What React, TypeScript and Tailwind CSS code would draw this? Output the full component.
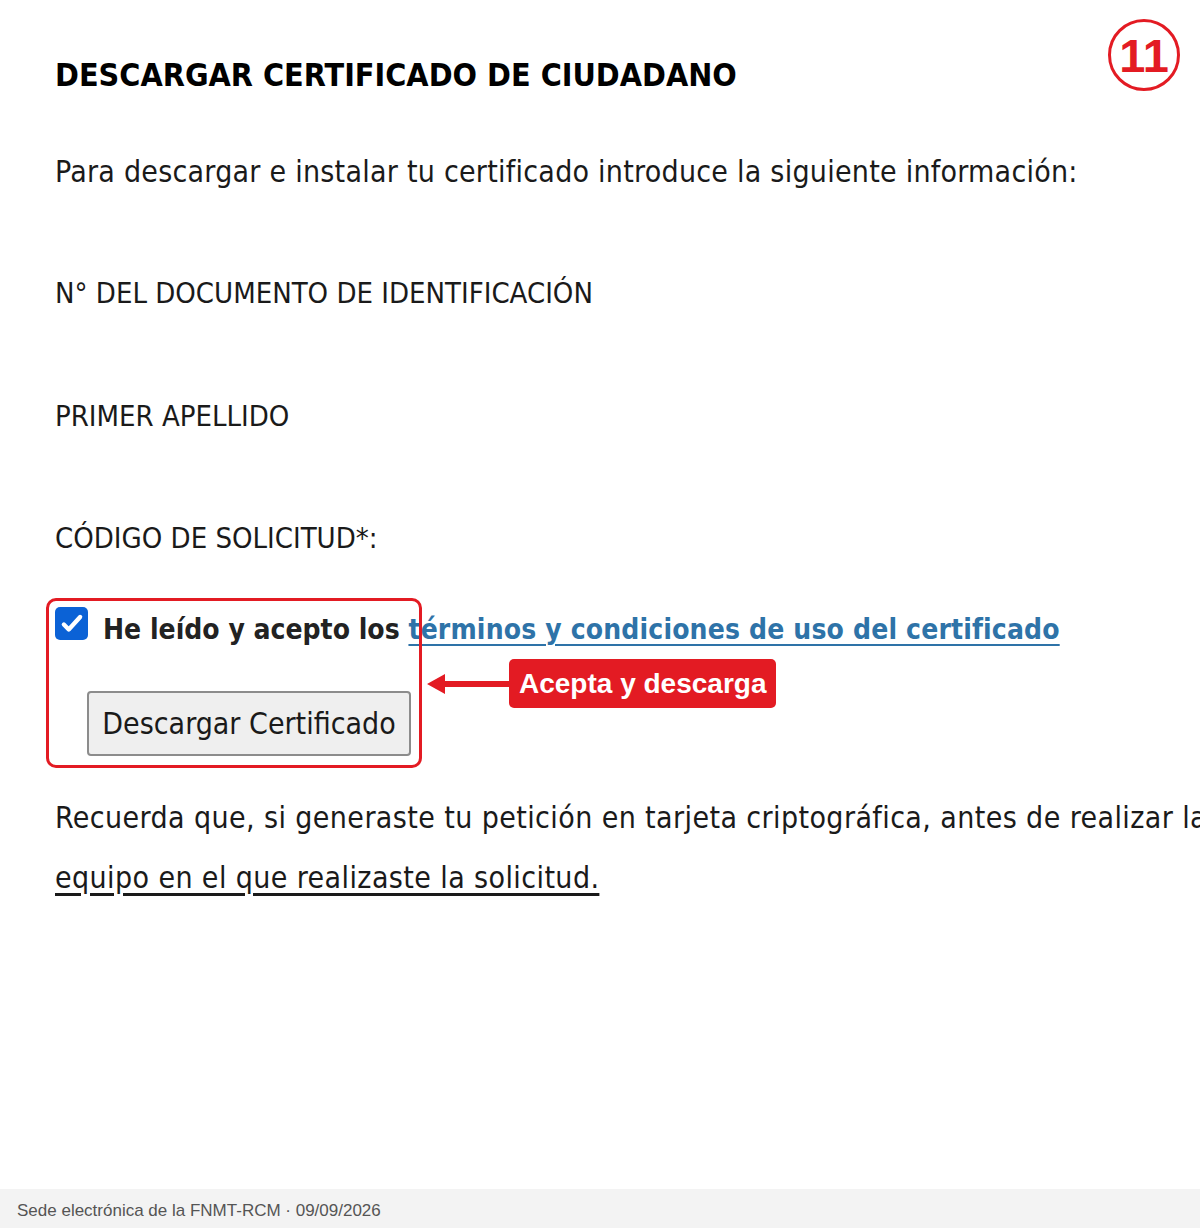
const FONT = "font-['DejaVu_Sans_Condensed','DejaVu_Sans',sans-serif]";

export default function App() {
  return (
    <div className="relative flex h-[1228px] w-[1200px] flex-col overflow-hidden bg-white">
      <main className={`flex-1 pl-[55px] pt-[55px] text-[#1a1a1a] ${FONT}`}>
        <h1 className="text-[32px] font-bold leading-[40px] text-black">
          DESCARGAR CERTIFICADO DE CIUDADANO
        </h1>
        <p className="mt-[57px] text-[30px] leading-[40px] tracking-[0.25px]">
          Para descargar e instalar tu certificado introduce la siguiente información:
        </p>
        <div className="mt-[81px] text-[29px] leading-[40px]">N° DEL DOCUMENTO DE IDENTIFICACIÓN</div>
        <div className="mt-[83px] text-[29px] leading-[40px]">PRIMER APELLIDO</div>
        <div className="mt-[82px] text-[29px] leading-[40px]">CÓDIGO DE SOLICITUD*:</div>

        <section className="relative mt-[52px]">
          <label className="flex h-[40px] items-start whitespace-nowrap">
            <span className="mt-[-3px] grid h-[33px] w-[33px] place-items-center rounded-[5px] bg-[#0b62d6]">
              <svg width="26" height="26" viewBox="0 0 24 24" fill="none" stroke="white" strokeWidth="4" strokeLinecap="round" strokeLinejoin="round" aria-hidden="true">
                <path d="M4.5 12.5l4.5 4.5L19.5 5.5" />
              </svg>
            </span>
            <span className="ml-[15px] text-[28px] font-bold leading-[40px] text-[#222]">
              He leído y acepto los{" "}
              <a href="#" className="tracking-[0.15px] text-[#2e73a8] underline decoration-2 underline-offset-[5px]">
                términos y condiciones de uso del certificado
              </a>
            </span>
          </label>
          <button
            type="button"
            className="ml-[32px] mt-[41px] h-[65px] w-[324px] rounded-[4px] border-2 border-[#8c8c8c] bg-[#efefef] text-[30px] text-[#1a1a1a]"
          >
            Descargar Certificado
          </button>

          {/* annotation */}
          <div className="pointer-events-none absolute left-[-9px] top-[-12px] h-[170px] w-[376px] rounded-[10px] border-[3px] border-[#e31b23]" />
          <div className="absolute left-[372px] top-[49px] flex items-center">
            <svg width="84" height="24" viewBox="0 0 84 24" aria-hidden="true">
              <path d="M0 12L18 2v7h66v6H18v7z" fill="#e31b23" />
            </svg>
            <span className="ml-[-2px] rounded-[5px] bg-[#e31b23] px-[10px] py-[4px] font-['Liberation_Sans',Arial,sans-serif] text-[28px] font-bold leading-[41px] text-white">
              Acepta y descarga
            </span>
          </div>
        </section>

        <div className="mt-[32px] text-[30px] leading-[60px] tracking-[0.4px]">
          <div className="whitespace-nowrap">
            Recuerda que, si generaste tu petición en tarjeta criptográfica, antes de realizar la
          </div>
          <div className="underline underline-offset-[5px]">equipo en el que realizaste la solicitud.</div>
        </div>
      </main>

      <div className="absolute right-[20px] top-[19px] grid h-[72px] w-[72px] place-items-center rounded-full border-[3px] border-[#e31b23] font-['Liberation_Sans',Arial,sans-serif] text-[47px] font-bold leading-none text-[#e31b23]">
        11
      </div>

      <footer className="flex h-[39px] items-center bg-[#f3f3f3] px-[17px] pt-[5px] font-['Liberation_Sans',Arial,sans-serif] text-[17px] text-[#555]">
        Sede electrónica de la FNMT-RCM · 09/09/2026
      </footer>
    </div>
  );
}
